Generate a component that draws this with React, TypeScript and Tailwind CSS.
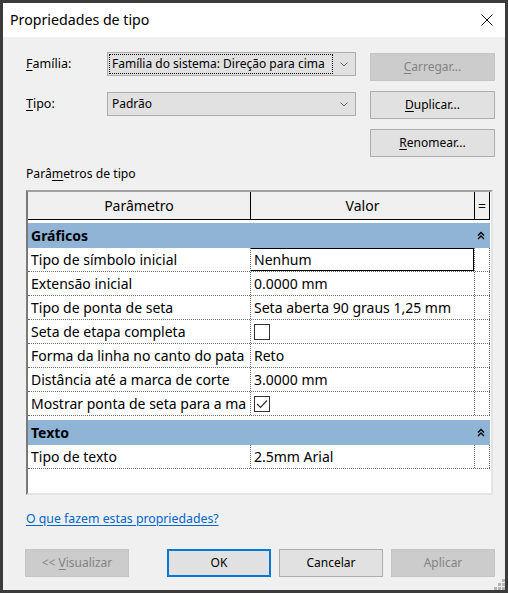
import React from "react";

const dot = "border-dotted border-[#6f6f6f]";

function U({ children }: { children: React.ReactNode }) {
  return <span className="underline underline-offset-[2px]">{children}</span>;
}

function Arrow() {
  return (
    <svg width="8" height="5" viewBox="0 0 8 5" className="text-[#606060]">
      <path d="M0.5 0.5 L4 4 L7.5 0.5" fill="none" stroke="currentColor" strokeWidth="1" />
    </svg>
  );
}

function Collapse() {
  return (
    <svg width="8" height="9" viewBox="0 0 8 9">
      <path d="M1 4.5 L4 1.5 L7 4.5 M1 8 L4 5 L7 8" fill="none" stroke="#000" strokeWidth="1.4" />
    </svg>
  );
}

function Check({ on }: { on: boolean }) {
  return (
    <div className="w-[16px] h-[16px] border border-[#333] bg-white flex items-center justify-center">
      {on && (
        <svg width="12" height="10" viewBox="0 0 12 10">
          <path d="M1 5 L4.5 8.5 L11 1.5" fill="none" stroke="#333" strokeWidth="1.2" />
        </svg>
      )}
    </div>
  );
}

function Button({
  children,
  disabled,
  primary,
  className = "",
}: {
  children: React.ReactNode;
  disabled?: boolean;
  primary?: boolean;
  className?: string;
}) {
  const look = disabled
    ? "bg-[#cccccc] border border-[#c4c4c4] text-[#838383]"
    : primary
    ? "bg-[#e1e1e1] border-2 border-[#0078d7] text-black"
    : "bg-[#e1e1e1] border border-[#adadad] text-black";
  return (
    <div className={`h-[28px] flex items-center justify-center text-[12px] ${look} ${className}`}>
      {children}
    </div>
  );
}

function Combo({ children, focus }: { children: React.ReactNode; focus?: boolean }) {
  return (
    <div className="w-[249px] h-[24px] border border-[#adadad] bg-[#e1e1e1] flex items-center">
      <div
        className={`ml-[1px] w-[224px] h-[20px] border border-dotted flex items-center pl-[2px] overflow-hidden whitespace-nowrap text-[12px] ${
          focus ? "border-black" : "border-transparent"
        }`}
      >
        {children}
      </div>
      <div className="flex-1 flex items-center justify-center pr-[1px]">
        <Arrow />
      </div>
    </div>
  );
}

type Row = { name: string; value?: string; check?: boolean; edit?: boolean };

const graficos: Row[] = [
  { name: "Tipo de símbolo inicial", value: "Nenhum", edit: true },
  { name: "Extensão inicial", value: "0.0000 mm" },
  { name: "Tipo de ponta de seta", value: "Seta aberta 90 graus 1,25 mm" },
  { name: "Seta de etapa completa", check: false },
  { name: "Forma da linha no canto do pata", value: "Reto" },
  { name: "Distância até a marca de corte", value: "3.0000 mm" },
  { name: "Mostrar ponta de seta para a ma", check: true },
];

const texto: Row[] = [{ name: "Tipo de texto", value: "2.5mm Arial" }];

function Group({ title }: { title: string }) {
  return (
    <div className="w-[462px] h-[25px] bg-[#8fb4d5] flex items-center justify-between pl-[3px] pr-[5px] font-bold">
      <span>{title}</span>
      <Collapse />
    </div>
  );
}

function PropRow({ row }: { row: Row }) {
  return (
    <div className={`w-[462px] h-[24px] flex border-b ${dot}`}>
      <div className={`w-[223px] border-r ${dot} pl-[3px] flex items-center overflow-hidden whitespace-nowrap`}>
        {row.name}
      </div>
      <div className={`relative w-[224px] border-r ${dot} pl-[3px] flex items-center whitespace-nowrap overflow-hidden`}>
        {row.edit && (
          <div className="absolute left-[-1px] top-0 right-[-1px] bottom-[-1px] border border-r-2 border-b-2 border-black bg-white" />
        )}
        {row.check !== undefined ? <Check on={row.check} /> : <span className="relative">{row.value}</span>}
      </div>
      <div className={`w-[15px] border-r ${dot}`} />
    </div>
  );
}

export default function App() {
  return (
    <div className="w-[508px] h-[593px] border-[3px] border-[#3b3b3b] bg-[#f0f0f0] flex flex-col font-['Noto_Sans','Liberation_Sans',sans-serif] text-black">
      <div className="h-[34px] bg-white flex items-center justify-between pl-[7px] pr-[12px]">
        <span className="text-[14.2px]">Propriedades de tipo</span>
        <svg width="12" height="12" viewBox="0 0 12 12">
          <path d="M0.5 0.5 L11.5 11.5 M11.5 0.5 L0.5 11.5" fill="none" stroke="#111" strokeWidth="1" />
        </svg>
      </div>

      <div className="relative flex-1 flex flex-col pl-[23px]">
        <div className="mt-[15px] flex items-start">
          <div className="w-[81px] h-[24px] flex items-center text-[12.5px]">
            <span>
              <U>F</U>amília:
            </span>
          </div>
          <Combo focus>Família do sistema: Direção para cima</Combo>
          <Button disabled className="ml-[14px] mt-[1px] w-[125px]">
            <span>
              <U>C</U>arregar...
            </span>
          </Button>
        </div>

        <div className="mt-[10px] flex items-start">
          <div className="mt-[1px] w-[81px] h-[24px] flex items-center text-[12.5px]">
            <span>
              <U>T</U>ipo:
            </span>
          </div>
          <div className="mt-[1px]">
            <Combo>Padrão</Combo>
          </div>
          <Button className="ml-[14px] w-[125px]">
            <span>
              <U>D</U>uplicar...
            </span>
          </Button>
        </div>

        <div className="mt-[10px] flex">
          <Button className="ml-[344px] w-[125px]">
            <span>
              <U>R</U>enomear...
            </span>
          </Button>
        </div>

        <div className="mt-[9px] h-[16px] leading-[16px] text-[12.2px]">
          Parâ<U>m</U>etros de tipo
        </div>

        <div className="mt-[8px] w-[467px] h-[305px] border-2 border-t-[#a0a0a0] border-l-[#7a7a7a] border-r-[#e3e3e3] border-b-[#e3e3e3] bg-white flex flex-col text-[14px] overflow-hidden">
          <div className="w-[462px] h-[28px] flex bg-[#f0f0f0] border-b border-black">
            <div className="w-[223px] border-r border-black flex items-center justify-center">Parâmetro</div>
            <div className="w-[224px] border-r border-black flex items-center justify-center">Valor</div>
            <div className="w-[15px] border-r border-black flex items-center justify-center">=</div>
          </div>
          <div className="h-[3px]" />
          <Group title="Gráficos" />
          {graficos.map((r) => (
            <PropRow key={r.name} row={r} />
          ))}
          <div className="h-[4px]" />
          <Group title="Texto" />
          {texto.map((r) => (
            <PropRow key={r.name} row={r} />
          ))}
        </div>

        <div className="mt-[16px] h-[16px] leading-[16px] text-[12.3px] text-[#0066cc] underline underline-offset-[2px]">
          O que fazem estas propriedades?
        </div>

        <div className="mt-[22px] flex">
          <Button disabled className="ml-[-1px] w-[104px]">
            <span>
              &lt;&lt; <U>V</U>isualizar
            </span>
          </Button>
          <Button primary className="ml-[38px] w-[104px]">
            OK
          </Button>
          <Button className="ml-[8px] w-[104px]">Cancelar</Button>
          <Button disabled className="ml-[8px] w-[104px]">
            Aplicar
          </Button>
        </div>

        <svg width="11" height="11" viewBox="0 0 11 11" className="absolute right-[0px] bottom-[0px]">
          <g fill="#b4b4b4">
            <rect x="8" y="0" width="3" height="3" />
            <rect x="4" y="4" width="3" height="3" />
            <rect x="8" y="4" width="3" height="3" />
            <rect x="0" y="8" width="3" height="3" />
            <rect x="4" y="8" width="3" height="3" />
            <rect x="8" y="8" width="3" height="3" />
          </g>
        </svg>
      </div>
    </div>
  );
}
